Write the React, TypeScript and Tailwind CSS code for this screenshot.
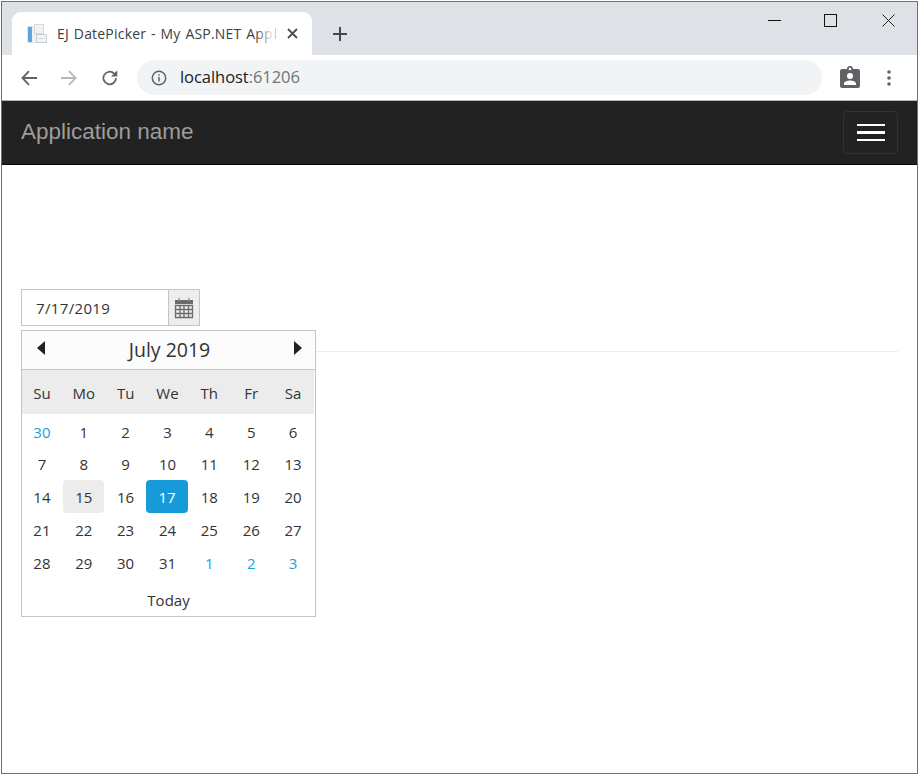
import React from "react";

const segoe = "font-['Open_Sans','Noto_Sans',sans-serif]";

const weeks: { t: string; other?: boolean; kind?: string }[][] = [
  [{ t: "30", other: true }, { t: "1" }, { t: "2" }, { t: "3" }, { t: "4" }, { t: "5" }, { t: "6" }],
  [{ t: "7" }, { t: "8" }, { t: "9" }, { t: "10" }, { t: "11" }, { t: "12" }, { t: "13" }],
  [{ t: "14" }, { t: "15", kind: "today" }, { t: "16" }, { t: "17", kind: "sel" }, { t: "18" }, { t: "19" }, { t: "20" }],
  [{ t: "21" }, { t: "22" }, { t: "23" }, { t: "24" }, { t: "25" }, { t: "26" }, { t: "27" }],
  [{ t: "28" }, { t: "29" }, { t: "30" }, { t: "31" }, { t: "1", other: true }, { t: "2", other: true }, { t: "3", other: true }],
];

function Favicon() {
  return (
    <svg width="20" height="20" viewBox="0 0 20 20" className="shrink-0">
      <rect x="0.500" y="2.500" width="14" height="16" fill="#eef1f4" stroke="#e2e5e9" />
      <rect x="1" y="3" width="4" height="15" fill="#5aa7dc" />
      <rect x="7.500" y="0.500" width="9" height="9" fill="#f1f3f5" stroke="#d5d9de" />
      <rect x="9.500" y="10.500" width="10" height="8" fill="#f3f4f6" stroke="#c9ced4" />
      <path d="M11 14.500h7" stroke="#d5d9de" />
    </svg>
  );
}

function CalendarIcon() {
  return (
    <svg width="20" height="22" viewBox="0 0 20 22">
      <rect x="1" y="3" width="18" height="4" fill="#6b6b6b" />
      <rect x="4.500" y="1" width="1.500" height="3" fill="#9a9a9a" />
      <rect x="14" y="1" width="1.500" height="3" fill="#9a9a9a" />
      <path
        d="M1.500 8.500h17v12h-17zM1.500 12.500h17M1.500 16.500h17M6 8.500v12M10 8.500v12M14.500 8.500v12"
        fill="none"
        stroke="#6b6b6b"
        strokeWidth="1.300"
      />
    </svg>
  );
}

export default function App() {
  return (
    <div className="w-[918px] h-[774px] bg-white pl-px pt-px">
      <div className="w-[917px] h-[773px] bg-white border border-[#6f6f6f] border-t-[#3b82c4] flex flex-col overflow-hidden relative">
        {/* tab strip */}
        <div className="h-[53px] bg-[#dee1e6] flex items-end pl-[10px] shrink-0">
          <div className="w-[300px] h-[43px] bg-white rounded-t-[9px] flex items-center pl-[15px] gap-[10px] text-[#3c4043] font-['Open_Sans',sans-serif] text-[14px]">
            <Favicon />
            <div className="w-[218px] whitespace-nowrap relative leading-[18px] tracking-[0.200px] [word-spacing:1px]">
              EJ DatePicker - My ASP.NET Appl
              <div className="absolute right-0 top-0 bottom-0 w-[20px] bg-gradient-to-r from-transparent to-white" />
            </div>
            <svg width="11" height="11" viewBox="0 0 11 11" className="shrink-0 ml-[2px]">
              <path d="M1 1l9 9M10 1l-9 9" stroke="#4a4d51" strokeWidth="1.800" />
            </svg>
          </div>
          <div className="h-[43px] flex items-center pl-[21px]">
            <svg width="14" height="14" viewBox="0 0 14 14">
              <path d="M7 0v14M0 7h14" stroke="#44474b" strokeWidth="2" />
            </svg>
          </div>
          <div className="flex-1" />
        </div>

        {/* window controls */}
        <div className="absolute top-[12px] right-[22px] flex items-center gap-[43px]">
          <div className="w-[13px] h-[1px] bg-[#111]" />
          <div className="w-[13px] h-[13px] border border-[#111]" />
          <svg width="13" height="13" viewBox="0 0 13 13" className="ml-[2px]">
            <path d="M0.500 0.500l12 12M12.500 0.500l-12 12" stroke="#222" strokeWidth="1" />
          </svg>
        </div>

        {/* toolbar */}
        <div className="h-[45px] bg-white flex items-center shrink-0 border-b border-[#b4b4b4] box-content">
          <div className="flex items-center pl-[19px] gap-[24px] w-[135px]">
            <svg width="16" height="16" viewBox="0 0 16 16">
              <path d="M16 8H1.500M8 1.200L1.400 8l6.600 6.800" fill="none" stroke="#5f6368" strokeWidth="1.800" />
            </svg>
            <svg width="16" height="16" viewBox="0 0 16 16">
              <path d="M0 8h14.500M8 1.200L14.600 8 8 14.800" fill="none" stroke="#b5b8bb" strokeWidth="1.800" />
            </svg>
            <svg width="18" height="18" viewBox="0 0 18 18">
              <path d="M15 9a6.300 6.300 0 1 1-1.900-4.500" fill="none" stroke="#5f6368" strokeWidth="1.800" />
              <path d="M16.300 1.200v6.300H10z" fill="#5f6368" />
            </svg>
          </div>
          <div className="w-[685px] h-[35px] rounded-full bg-[#f1f3f4] flex items-center pl-[14px] gap-[13px]">
            <svg width="16" height="16" viewBox="0 0 16 16">
              <circle cx="8" cy="8" r="6.700" fill="none" stroke="#5f6368" strokeWidth="1.500" />
              <path d="M8 7v4.500M8 4.300v1.500" stroke="#5f6368" strokeWidth="1.500" />
            </svg>
            <span className="font-['Open_Sans',sans-serif] text-[16.500px] text-[#202124] tracking-[-0.050px]">
              localhost<span className="text-[#70757a]">:61206</span>
            </span>
          </div>
          <div className="flex items-center pl-[18px] gap-[27px]">
            <svg width="20" height="24" viewBox="0 0 20 24">
              <path
                d="M2 3h5a3 3 0 0 1 6 0h5a2 2 0 0 1 2 2v15a2 2 0 0 1-2 2H2a2 2 0 0 1-2-2V5a2 2 0 0 1 2-2z"
                fill="#5f6368"
              />
              <circle cx="10" cy="3" r="1.300" fill="#fff" />
              <circle cx="10" cy="10" r="3" fill="#fff" />
              <path d="M4 19v-1.500c0-2 3.500-3 6-3s6 1 6 3V19z" fill="#fff" />
            </svg>
            <svg width="4" height="16" viewBox="0 0 4 16">
              <circle cx="2" cy="2" r="1.800" fill="#5f6368" />
              <circle cx="2" cy="8" r="1.800" fill="#5f6368" />
              <circle cx="2" cy="14" r="1.800" fill="#5f6368" />
            </svg>
          </div>
        </div>

        {/* navbar */}
        <div className="h-[64px] bg-[#222222] border-b border-[#080808] flex items-center justify-between pl-[19px] pr-[19px] shrink-0">
          <span className="font-['Liberation_Sans',sans-serif] text-[22.500px] text-[#9d9d9d] leading-[28px] mb-[2px]">Application name</span>
          <div className="w-[55px] h-[43px] border border-[#333333] rounded-[4px] flex flex-col items-center justify-center gap-[5px]">
            <div className="w-[28px] h-[2px] bg-white" />
            <div className="w-[28px] h-[3px] bg-white" />
            <div className="w-[28px] h-[2px] bg-white" />
          </div>
        </div>

        {/* content */}
        <div className={`flex-1 relative pt-[124px] px-[19px] ${segoe}`}>
          <div className="w-[179px] h-[37px] border border-[#c4c4c4] flex">
            <div className="flex-1 pl-[14px] pt-px flex items-center text-[15px] text-[#333] tracking-[0.350px]">7/17/2019</div>
            <div className="w-[31px] border-l border-[#c4c4c4] bg-[#eeeeee] flex items-center justify-center">
              <CalendarIcon />
            </div>
          </div>
          <div className="h-px bg-[#eeeeee] mt-[25px]" />

          {/* popup */}
          <div className="absolute left-[19px] top-[165px] w-[295px] h-[287px] border border-[#c4c4c4] bg-white flex flex-col">
            <div className="h-[38px] bg-[#fcfcfc] border-b border-[#c4c4c4] flex items-center justify-between pl-[15px] pr-[13px] box-content">
              <svg width="8" height="14" viewBox="0 0 8 14" className="mb-[4px]">
                <path d="M8 0v14L0 7z" fill="#222" />
              </svg>
              <span className="text-[19.500px] text-[#333] leading-[24px]">July 2019</span>
              <svg width="8" height="14" viewBox="0 0 8 14" className="mb-[4px]">
                <path d="M0 0v14l8-7z" fill="#222" />
              </svg>
            </div>
            <div className="h-[44px] bg-[#ececec] mr-px text-[15px] text-[#333]">
              <div className="w-[293px] -ml-px h-full pt-[2px] grid grid-cols-7 items-center">
                {["Su", "Mo", "Tu", "We", "Th", "Fr", "Sa"].map((d) => (
                  <div key={d} className="text-center">{d}</div>
                ))}
              </div>
            </div>
            <div className="mt-[2px] w-[293px] -ml-px flex flex-col text-[15px] text-[#333]">
              {weeks.map((w, i) => (
                <div key={i} className={`grid grid-cols-7 ${i < 2 ? "h-[32px]" : "h-[33px]"}`}>
                  {w.map((c, j) => (
                    <div key={j} className="flex items-center justify-center">
                      <div
                        className={
                          (c.kind === "sel"
                            ? "w-[42px] h-[33px] -ml-px rounded-[4px] bg-[#169bd8] text-white flex items-center justify-center"
                            : c.kind === "today"
                              ? "w-[41px] h-[33px] rounded-[4px] bg-[#ececec] flex items-center justify-center"
                              : c.other
                                ? "text-[#1b9ddb]"
                                : "") + (i >= 2 ? " pt-[2px]" : "")
                        }
                      >
                        {c.t}
                      </div>
                    </div>
                  ))}
                </div>
              ))}
            </div>
            <div className="text-center text-[15px] text-[#333] mt-[11px] leading-[20px]">Today</div>
          </div>
        </div>
      </div>
    </div>
  );
}
